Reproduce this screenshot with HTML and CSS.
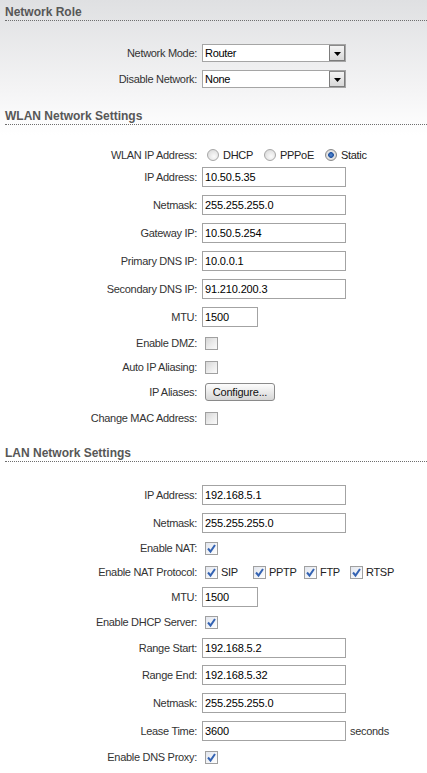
FILE: index.html
```html
<!DOCTYPE html>
<html>
<head>
<meta charset="utf-8">
<title>Network</title>
<link rel="stylesheet" href="styles.css">
</head>
<body>
<div class="page">

<section class="sec sec-role">
  <h2 class="sec-title">Network Role</h2>
  <div class="form">
    <div class="row h26"><span class="lbl">Network Mode:</span>
      <div class="field"><div class="select"><span class="sel-val">Router</span><span class="sel-btn"><svg width="7" height="4" viewBox="0 0 7 4"><path d="M0 0H7L3.5 4Z" fill="#000"/></svg></span></div></div></div>
    <div class="row h26"><span class="lbl">Disable Network:</span>
      <div class="field"><div class="select"><span class="sel-val">None</span><span class="sel-btn"><svg width="7" height="4" viewBox="0 0 7 4"><path d="M0 0H7L3.5 4Z" fill="#000"/></svg></span></div></div></div>
  </div>
</section>

<section class="sec sec-wlan">
  <h2 class="sec-title">WLAN Network Settings</h2>
  <div class="form">
    <div class="row h16"><span class="lbl">WLAN IP Address:</span>
      <div class="field">
        <span class="radio"></span><span class="opt-text r-gap">DHCP</span>
        <span class="radio"></span><span class="opt-text r-gap">PPPoE</span>
        <span class="radio on"></span><span class="opt-text">Static</span>
      </div></div>
    <div class="row h28"><span class="lbl">IP Address:</span><div class="field"><input class="txt" type="text" value="10.50.5.35"></div></div>
    <div class="row h28"><span class="lbl">Netmask:</span><div class="field"><input class="txt" type="text" value="255.255.255.0"></div></div>
    <div class="row h28"><span class="lbl">Gateway IP:</span><div class="field"><input class="txt" type="text" value="10.50.5.254"></div></div>
    <div class="row h28"><span class="lbl">Primary DNS IP:</span><div class="field"><input class="txt" type="text" value="10.0.0.1"></div></div>
    <div class="row h28"><span class="lbl">Secondary DNS IP:</span><div class="field"><input class="txt" type="text" value="91.210.200.3"></div></div>
    <div class="row h28"><span class="lbl">MTU:</span><div class="field"><input class="txt short" type="text" value="1500"></div></div>
    <div class="row h24"><span class="lbl">Enable DMZ:</span><div class="field"><span class="cb"></span></div></div>
    <div class="row h24"><span class="lbl">Auto IP Aliasing:</span><div class="field"><span class="cb"></span></div></div>
    <div class="row h26"><span class="lbl">IP Aliases:</span><div class="field"><button class="btn" type="button">Configure...</button></div></div>
    <div class="row h26"><span class="lbl">Change MAC Address:</span><div class="field"><span class="cb"></span></div></div>
  </div>
</section>

<section class="sec sec-lan">
  <h2 class="sec-title">LAN Network Settings</h2>
  <div class="form">
    <div class="row h28"><span class="lbl">IP Address:</span><div class="field"><input class="txt" type="text" value="192.168.5.1"></div></div>
    <div class="row h28"><span class="lbl">Netmask:</span><div class="field"><input class="txt" type="text" value="255.255.255.0"></div></div>
    <div class="row h22"><span class="lbl">Enable NAT:</span><div class="field"><span class="cb on"><svg width="11" height="11" viewBox="0 0 11 11"><path d="M2 5.5L4.5 8.5L9 2" fill="none" stroke="#3463b3" stroke-width="2"/></svg></span></div></div>
    <div class="row h26"><span class="lbl">Enable NAT Protocol:</span>
      <div class="field protos">
        <span class="opt"><span class="cb on"><svg width="11" height="11" viewBox="0 0 11 11"><path d="M2 5.5L4.5 8.5L9 2" fill="none" stroke="#3463b3" stroke-width="2"/></svg></span><span class="opt-text">SIP</span></span>
        <span class="opt"><span class="cb on"><svg width="11" height="11" viewBox="0 0 11 11"><path d="M2 5.5L4.5 8.5L9 2" fill="none" stroke="#3463b3" stroke-width="2"/></svg></span><span class="opt-text">PPTP</span></span>
        <span class="opt"><span class="cb on"><svg width="11" height="11" viewBox="0 0 11 11"><path d="M2 5.5L4.5 8.5L9 2" fill="none" stroke="#3463b3" stroke-width="2"/></svg></span><span class="opt-text">FTP</span></span>
        <span class="opt"><span class="cb on"><svg width="11" height="11" viewBox="0 0 11 11"><path d="M2 5.5L4.5 8.5L9 2" fill="none" stroke="#3463b3" stroke-width="2"/></svg></span><span class="opt-text">RTSP</span></span>
      </div></div>
    <div class="row h24"><span class="lbl">MTU:</span><div class="field"><input class="txt short" type="text" value="1500"></div></div>
    <div class="row h26"><span class="lbl">Enable DHCP Server:</span><div class="field"><span class="cb on"><svg width="11" height="11" viewBox="0 0 11 11"><path d="M2 5.5L4.5 8.5L9 2" fill="none" stroke="#3463b3" stroke-width="2"/></svg></span></div></div>
    <div class="row h26"><span class="lbl">Range Start:</span><div class="field"><input class="txt" type="text" value="192.168.5.2"></div></div>
    <div class="row h28"><span class="lbl">Range End:</span><div class="field"><input class="txt" type="text" value="192.168.5.32"></div></div>
    <div class="row h28"><span class="lbl">Netmask:</span><div class="field"><input class="txt" type="text" value="255.255.255.0"></div></div>
    <div class="row h28"><span class="lbl">Lease Time:</span><div class="field"><input class="txt" type="text" value="3600"><span class="unit">seconds</span></div></div>
    <div class="row h24"><span class="lbl">Enable DNS Proxy:</span><div class="field"><span class="cb on"><svg width="11" height="11" viewBox="0 0 11 11"><path d="M2 5.5L4.5 8.5L9 2" fill="none" stroke="#3463b3" stroke-width="2"/></svg></span></div></div>
  </div>
</section>

</div>
</body>
</html>
```

FILE: styles.css
```css
html, body {
  margin: 0;
  padding: 0;
}
body {
  background: #fff linear-gradient(#dfe0e2 0, #f4f4f5 90px, #fff 135px) no-repeat;
  background-size: 100% 140px;
  font-family: "Liberation Sans", Arial, sans-serif;
  font-size: 11px;
  letter-spacing: -0.3px;
  color: #333;
  width: 427px;
  height: 773px;
  overflow: hidden;
}
.sec-title {
  margin: 0 0 0 5px;
  padding: 4px 0 0 0;
  height: 16px;
  line-height: 16px;
  font-size: 12px;
  font-weight: bold;
  letter-spacing: 0;
  color: #575757;
  border-bottom: 1px dotted #6e6e6e;
}
.sec-role .form { padding: 19px 0 12px; }
.sec-wlan .form { padding: 22px 0 10px; }
.sec-lan .form { padding: 19px 0 0; }

.row {
  display: flex;
  align-items: center;
}
.h16 { height: 16px; }
.h22 { height: 22px; }
.h24 { height: 24px; }
.h26 { height: 26px; }
.h28 { height: 28px; }

.lbl {
  flex: none;
  width: 197px;
  text-align: right;
  white-space: nowrap;
  color: #333;
}
.field {
  margin-left: 5px;
  display: flex;
  align-items: center;
}

.txt {
  box-sizing: border-box;
  width: 144px;
  height: 20px;
  margin: 0;
  padding: 0 2px;
  border: 1px solid #a3a3a3;
  background: #fff;
  font-family: "Liberation Sans", Arial, sans-serif;
  font-size: 11px;
  letter-spacing: -0.15px;
  color: #000;
  outline: none;
}
.txt.short { width: 56px; }
.unit { margin-left: 4px; color: #333; }

.select {
  box-sizing: border-box;
  width: 144px;
  height: 18px;
  border: 1px solid #a5a5a5;
  background: #fff;
  display: flex;
  align-items: center;
  justify-content: space-between;
}
.sel-val {
  padding-left: 2px;
  color: #000;
}
.sel-btn {
  box-sizing: border-box;
  width: 16px;
  height: 16px;
  border: 1px solid #7c7c7c;
  border-top-color: #8a8a8a;
  background: linear-gradient(#f4f4f4, #d8d8d8);
  display: flex;
  align-items: center;
  justify-content: center;
  padding-top: 2px;
}

.radio {
  box-sizing: border-box;
  width: 12px;
  height: 12px;
  margin-left: 5px;
  margin-right: 4px;
  border-radius: 50%;
  border: 1px solid #a7a7a7;
  background: radial-gradient(circle at 60% 65%, #fbfbfb 0, #dcdcdc 80%);
}
.radio.on {
  border-color: #8a8a8a;
  background: radial-gradient(circle at 50% 50%, #5a8fd6 0, #1d4f9e 2.5px, #e6e6e6 3.2px, #d2d2d2 6px);
}
.r-gap { margin-right: 6px; }
.opt-text { color: #222; }

.cb {
  box-sizing: border-box;
  width: 13px;
  height: 13px;
  margin-left: 3px;
  border: 1px solid #a0a0a0;
  background: linear-gradient(135deg, #d6d6d6 0, #ececec 55%, #fafafa 100%);
  display: flex;
  align-items: center;
  justify-content: center;
}
.cb.on {
  background: linear-gradient(135deg, #e2e6ee 0, #f6f7f9 70%, #fff 100%);
}

.protos {
  display: grid;
  grid-template-columns: 48px 51px 46px auto;
}
.opt {
  display: flex;
  align-items: center;
}
.opt .cb { margin-right: 3px; }

.btn {
  box-sizing: border-box;
  width: 70px;
  height: 18px;
  margin: 0 0 0 3px;
  padding: 0;
  border: 1px solid #8a8a8a;
  border-radius: 3px;
  background: linear-gradient(#fdfdfd, #e6e6e6 60%, #d6d6d6);
  font-family: "Liberation Sans", Arial, sans-serif;
  font-size: 11px;
  letter-spacing: -0.2px;
  color: #111;
}
```
